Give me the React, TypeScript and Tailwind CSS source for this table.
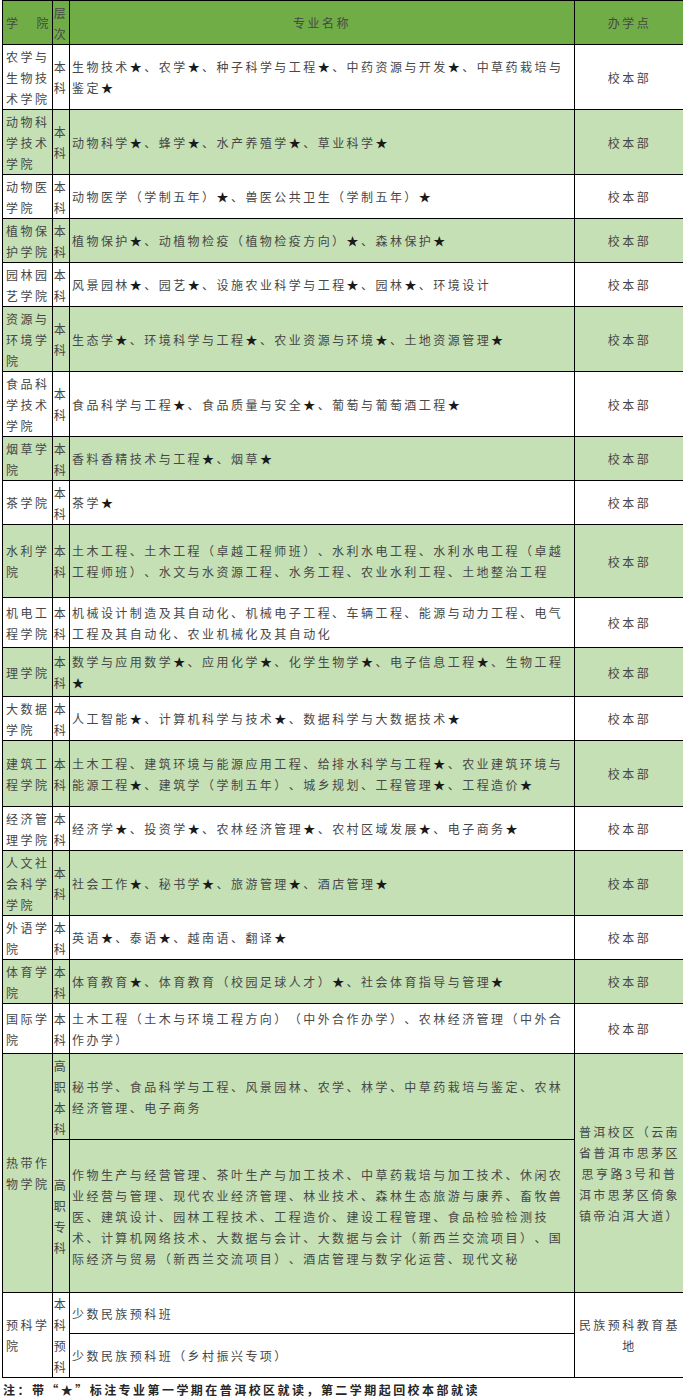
import React from 'react';

type Row = {
    college: string;
    majors: string;
    green: boolean;
    h: string;
};

const rows: Row[] = [
    { college: '农学与生物技术学院', majors: '生物技术★、农学★、种子科学与工程★、中药资源与开发★、中草药栽培与鉴定★', green: false, h: 'h-[65px]' },
    { college: '动物科学技术学院', majors: '动物科学★、蜂学★、水产养殖学★、草业科学★', green: true, h: 'h-[65px]' },
    { college: '动物医学院', majors: '动物医学（学制五年）★、兽医公共卫生（学制五年）★', green: false, h: 'h-[44px]' },
    { college: '植物保护学院', majors: '植物保护★、动植物检疫（植物检疫方向）★、森林保护★', green: true, h: 'h-[44px]' },
    { college: '园林园艺学院', majors: '风景园林★、园艺★、设施农业科学与工程★、园林★、环境设计', green: false, h: 'h-[44px]' },
    { college: '资源与环境学院', majors: '生态学★、环境科学与工程★、农业资源与环境★、土地资源管理★', green: true, h: 'h-[65px]' },
    { college: '食品科学技术学院', majors: '食品科学与工程★、食品质量与安全★、葡萄与葡萄酒工程★', green: false, h: 'h-[65px]' },
    { college: '烟草学院', majors: '香料香精技术与工程★、烟草★', green: true, h: 'h-[44px]' },
    { college: '茶学院', majors: '茶学★', green: false, h: 'h-[44px]' },
    { college: '水利学院', majors: '土木工程、土木工程（卓越工程师班）、水利水电工程、水利水电工程（卓越工程师班）、水文与水资源工程、水务工程、农业水利工程、土地整治工程', green: true, h: 'h-[73px]' },
    { college: '机电工程学院', majors: '机械设计制造及其自动化、机械电子工程、车辆工程、能源与动力工程、电气工程及其自动化、农业机械化及其自动化', green: false, h: 'h-[50px]' },
    { college: '理学院', majors: '数学与应用数学★、应用化学★、化学生物学★、电子信息工程★、生物工程★', green: true, h: 'h-[49px]' },
    { college: '大数据学院', majors: '人工智能★、计算机科学与技术★、数据科学与大数据技术★', green: false, h: 'h-[44px]' },
    { college: '建筑工程学院', majors: '土木工程、建筑环境与能源应用工程、给排水科学与工程★、农业建筑环境与能源工程★、建筑学（学制五年）、城乡规划、工程管理★、工程造价★', green: true, h: 'h-[66px]' },
    { college: '经济管理学院', majors: '经济学★、投资学★、农林经济管理★、农村区域发展★、电子商务★', green: false, h: 'h-[44px]' },
    { college: '人文社会科学学院', majors: '社会工作★、秘书学★、旅游管理★、酒店管理★', green: true, h: 'h-[65px]' },
    { college: '外语学院', majors: '英语★、泰语★、越南语、翻译★', green: false, h: 'h-[44px]' },
    { college: '体育学院', majors: '体育教育★、体育教育（校园足球人才）★、社会体育指导与管理★', green: true, h: 'h-[44px]' },
    { college: '国际学院', majors: '土木工程（土木与环境工程方向）（中外合作办学）、农林经济管理（中外合作办学）', green: false, h: 'h-[50px]' },
];

// stars are a bit darker than the rest of the text
const Majors = ({ text }: { text: string }) => {
    const parts = text.split('★');
    return (
        <>
            {parts.map((p, i) => (
                <React.Fragment key={i}>
                    {p}
                    {i < parts.length - 1 && <span className="text-[#1a1a1a]">★</span>}
                </React.Fragment>
            ))}
        </>
    );
};

const cell = 'border border-black p-0 align-middle';

const App: React.FC = () => {
    return (
        <div className="w-[683px] h-[1398px] overflow-hidden bg-white font-['Noto_Sans_CJK_SC','Noto_Sans',sans-serif] text-[12px] leading-[21px] tracking-[2.45px] text-[#474747] [text-spacing-trim:space-all]">
            <table className="ml-[2px] w-[682px] table-fixed border-collapse">
                <colgroup>
                    <col className="w-[50px]" />
                    <col className="w-[17px]" />
                    <col className="w-[505px]" />
                    <col className="w-[110px]" />
                </colgroup>
                <thead>
                    <tr className="h-[44px] bg-[#70ad47]">
                        <th className={`${cell} font-normal`}>
                            <div className="flex justify-between pl-[3px] pr-[1px]">
                                <span>学</span>
                                <span>院</span>
                            </div>
                        </th>
                        <th className={`${cell} font-normal text-center`}>层次</th>
                        <th className={`${cell} font-normal text-center`}>专业名称</th>
                        <th className={`${cell} font-normal text-center`}>办学点</th>
                    </tr>
                </thead>
                <tbody>
                    {rows.map(r => (
                        <tr key={r.college} className={`${r.h} ${r.green ? 'bg-[#c5e0b4]' : 'bg-white'}`}>
                            <td className={`${cell} pl-[3px] text-left`}>{r.college}</td>
                            <td className={`${cell} text-center`}>本科</td>
                            <td className={`${cell} pl-[2px] text-left`}>
                                <Majors text={r.majors} />
                            </td>
                            <td className={`${cell} text-center`}>校本部</td>
                        </tr>
                    ))}

                    <tr className="h-[86px] bg-[#c5e0b4]">
                        <td rowSpan={2} className={`${cell} pl-[3px] text-left`}>热带作物学院</td>
                        <td className={`${cell} text-center`}>高职本科</td>
                        <td className={`${cell} pl-[2px] text-left`}>
                            秘书学、食品科学与工程、风景园林、农学、林学、中草药栽培与鉴定、农林经济管理、电子商务
                        </td>
                        <td rowSpan={2} className={`${cell} text-center`}>
                            普洱校区（云南省普洱市思茅区思亨路3号和普洱市思茅区倚象镇帝泊洱大道）
                        </td>
                    </tr>
                    <tr className="h-[153px] bg-[#c5e0b4]">
                        <td className={`${cell} text-center`}>高职专科</td>
                        <td className={`${cell} pl-[2px] text-left`}>
                            作物生产与经营管理、茶叶生产与加工技术、中草药栽培与加工技术、休闲农业经营与管理、现代农业经济管理、林业技术、森林生态旅游与康养、畜牧兽医、建筑设计、园林工程技术、工程造价、建设工程管理、食品检验检测技术、计算机网络技术、大数据与会计、大数据与会计（新西兰交流项目）、国际经济与贸易（新西兰交流项目）、酒店管理与数字化运营、现代文秘
                        </td>
                    </tr>

                    <tr className="h-[41px] bg-white">
                        <td rowSpan={2} className={`${cell} pl-[3px] text-left`}>预科学院</td>
                        <td rowSpan={2} className={`${cell} text-center`}>本科预科</td>
                        <td className={`${cell} pl-[2px] text-left`}>少数民族预科班</td>
                        <td rowSpan={2} className={`${cell} text-center`}>民族预科教育基地</td>
                    </tr>
                    <tr className="h-[43px] bg-white">
                        <td className={`${cell} pl-[2px] text-left`}>少数民族预科班（乡村振兴专项）</td>
                    </tr>
                </tbody>
            </table>
            <p className="pl-[3px] pt-[1px] font-bold text-[#262626] leading-[21px]">
                注：带“★”标注专业第一学期在普洱校区就读，第二学期起回校本部就读
            </p>
        </div>
    );
};

export default App;
